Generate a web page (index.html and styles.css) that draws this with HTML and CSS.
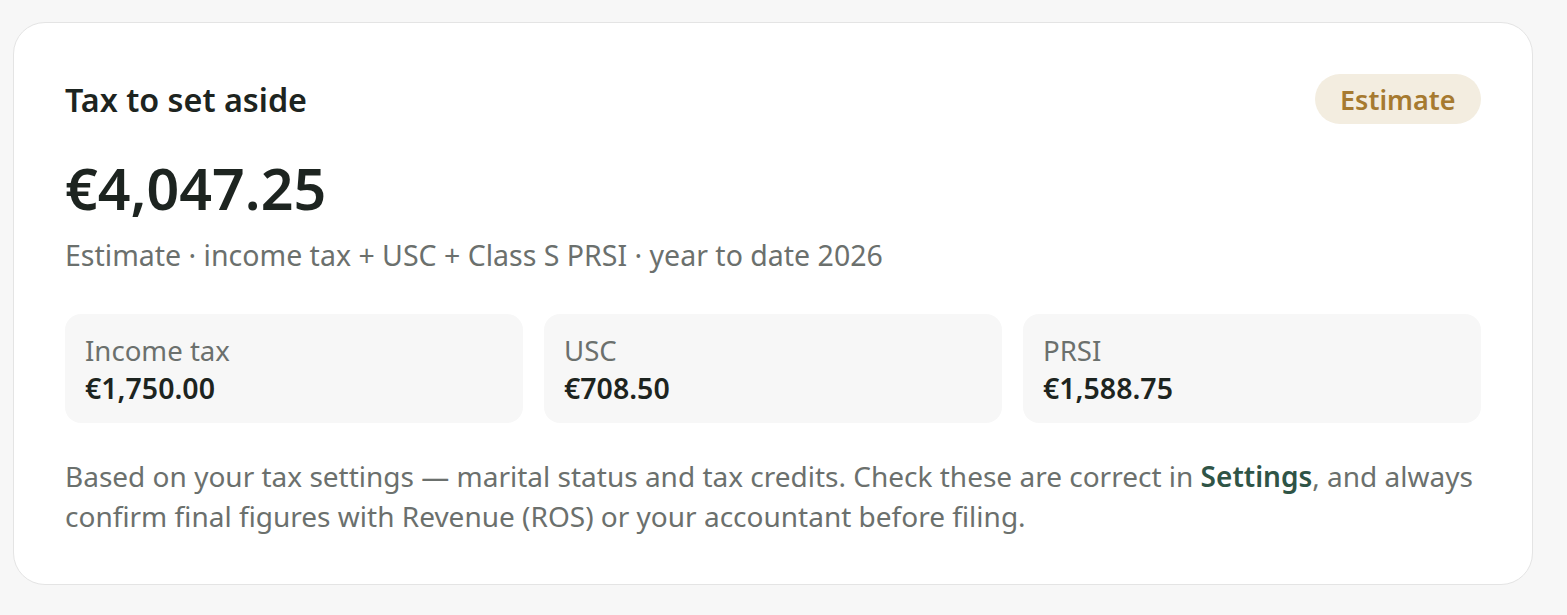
FILE: index.html
```html
<!DOCTYPE html>
<html lang="en">
<head>
<meta charset="utf-8">
<title>Tax to set aside</title>
<link rel="stylesheet" href="styles.css">
</head>
<body>
<section class="card">
  <header class="card-head">
    <h2 class="title">Tax to set aside</h2>
    <span class="badge">Estimate</span>
  </header>
  <div class="amount">€4,047.25</div>
  <p class="sub">Estimate · income tax + USC + Class S PRSI · year to date 2026</p>
  <div class="grid">
    <div class="cell">
      <div class="cell-label">Income tax</div>
      <div class="cell-value">€1,750.00</div>
    </div>
    <div class="cell">
      <div class="cell-label">USC</div>
      <div class="cell-value">€708.50</div>
    </div>
    <div class="cell">
      <div class="cell-label">PRSI</div>
      <div class="cell-value">€1,588.75</div>
    </div>
  </div>
  <p class="note">Based on your tax settings — marital status and tax credits. Check these are correct in <a class="link" href="#">Settings</a>, and always confirm final figures with Revenue (ROS) or your accountant before filing.</p>
</section>
</body>
</html>
```
FILE: styles.css
```css
* { box-sizing: border-box; }
html, body { margin: 0; padding: 0; }
body {
  background: #f7f7f7;
  font-family: "Noto Sans", "Open Sans", sans-serif;
  color: #1d2420;
  padding: 22px 35px 0 13px;
}
.card {
  width: 1520px;
  height: 563px;
  background: #ffffff;
  border: 1.5px solid #e4e4e4;
  border-radius: 32px;
  padding: 51px 51px 0 51px;
}
.card-head {
  display: flex;
  justify-content: space-between;
  align-items: center;
  height: 50px;
}
.title {
  margin: 0;
  font-size: 32.3px;
  font-weight: 600;
  line-height: 50px;
  color: #1d2420;
}
.badge {
  display: inline-flex;
  align-items: center;
  height: 50px;
  padding: 0 25.5px;
  border-radius: 25px;
  background: #f3ede0;
  color: #a67a30;
  font-size: 27px;
  font-weight: 600;
}
.amount {
  margin-top: 24px;
  font-size: 57.3px;
  font-weight: 600;
  line-height: 80px;
  color: #1d2420;
}
.sub {
  margin: 7px 0 0;
  font-size: 28.5px;
  line-height: 40px;
  color: #6b706d;
}
.grid {
  margin-top: 39px;
  display: grid;
  grid-template-columns: repeat(3, 1fr);
  gap: 21px;
}
.cell {
  background: #f7f7f7;
  border-radius: 16px;
  height: 109px;
  padding: 17px 20px;
}
.cell-label {
  font-size: 27.6px;
  line-height: 38px;
  color: #6b706d;
}
.cell-value {
  font-size: 28.5px;
  line-height: 38px;
  font-weight: 600;
  color: #1d2420;
}
.note {
  margin: 33px 0 0;
  font-size: 28px;
  line-height: 40px;
  color: #6b706d;
}
.link {
  color: #2f5446;
  font-weight: 600;
  text-decoration: none;
}
```
